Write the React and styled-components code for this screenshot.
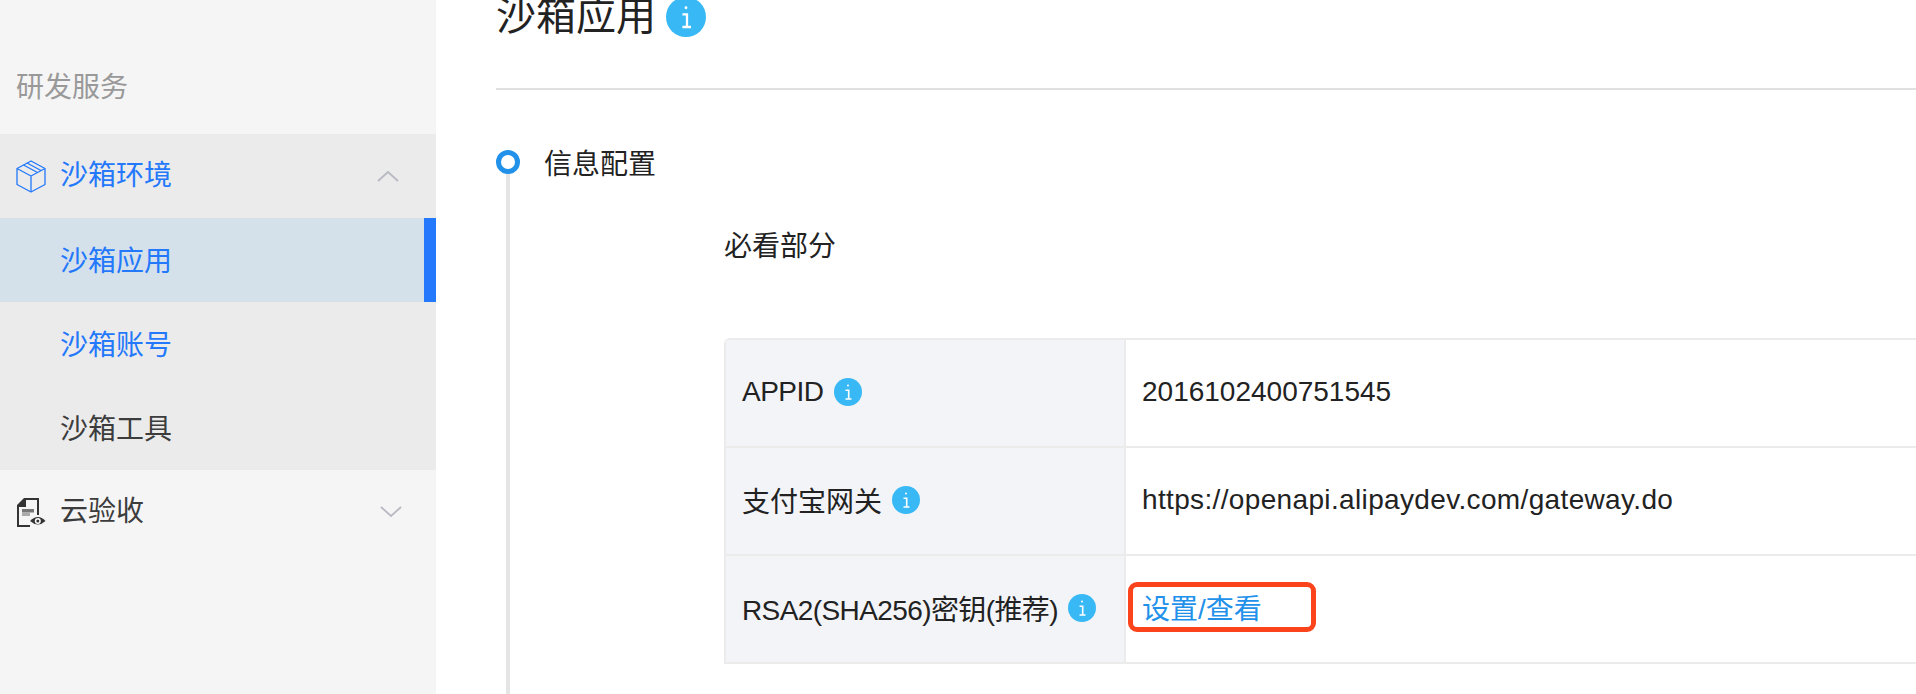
import styled, { createGlobalStyle } from "styled-components";

const GlobalStyle = createGlobalStyle`
  html, body {
    margin: 0;
    padding: 0;
    height: 100%;
    overflow: hidden;
    background: #fff;
  }
  body {
    font-family: "Liberation Sans", "Noto Sans CJK SC", sans-serif;
    color: #222;
  }
`;

const Page = styled.div`
  display: flex;
  height: 694px;
  overflow: hidden;
`;

const Sidebar = styled.aside`
  width: 436px;
  flex-shrink: 0;
  background: #f5f5f5;
  padding-top: 50px;
`;

const SideTitle = styled.div`
  height: 84px;
  padding: 0 0 14px 16px;
  box-sizing: border-box;
  display: flex;
  align-items: center;
  font-size: 28px;
  color: #999;
`;

const MenuGroup = styled.div`
  background: ${(p) => (p.$open ? "#ebebeb" : "transparent")};
`;

const MenuHead = styled.div`
  height: 84px;
  display: flex;
  align-items: center;
  padding-left: 16px;
  font-size: 28px;
  line-height: 36px;
  color: ${(p) => (p.$active ? "#2378fb" : "#3c3c3c")};
`;

const IconSlot = styled.span`
  width: 30px;
  height: 33px;
  margin-right: 14px;
  display: flex;
  align-items: center;
  justify-content: center;
`;

const Chevron = styled.svg`
  margin-left: auto;
  margin-right: ${(p) => (p.$up ? "37px" : "34px")};
  width: 22px;
  height: 12px;
`;

const SubItem = styled.div`
  height: 84px;
  box-sizing: border-box;
  display: flex;
  align-items: center;
  padding: 0 0 2px 60px;
  font-size: 28px;
  color: ${(p) => (p.$blue ? "#2378fb" : "#3c3c3c")};
  background: ${(p) => (p.$selected ? "#d5e1ea" : "transparent")};
  border-right: ${(p) => (p.$selected ? "12px solid #2378fb" : "none")};
`;

const Main = styled.main`
  flex: 1;
  min-width: 0;
  padding-left: 60px;
`;

const TitleRow = styled.div`
  height: 88px;
  display: flex;
  align-items: flex-start;
  gap: 10px;
  border-bottom: 2px solid #e0e0e0;
`;

const PageTitle = styled.h1`
  margin: -10px 0 0;
  font-size: 40px;
  line-height: 52px;
  font-weight: 400;
  color: #222;
`;

const TitleInfo = styled.span`
  display: flex;
  margin-top: -3px;
`;

const Timeline = styled.section`
  position: relative;
  padding-left: 48px;
  padding-top: 57px;
  height: 560px;
`;

const TimelineRail = styled.span`
  position: absolute;
  left: 10px;
  top: 72px;
  bottom: 0;
  width: 4px;
  background: #e5e5e5;
`;

const TimelineDot = styled.span`
  position: absolute;
  left: 0;
  top: 60px;
  width: 24px;
  height: 24px;
  box-sizing: border-box;
  border: 5px solid #2291ea;
  border-radius: 50%;
  background: #fff;
`;

const StepTitle = styled.div`
  font-size: 28px;
  line-height: 36px;
  color: #222;
`;

const Section = styled.div`
  margin-left: 180px;
  margin-top: 46px;
`;

const SectionTitle = styled.div`
  font-size: 28px;
  line-height: 36px;
  color: #222;
  margin-bottom: 73px;
`;

const Table = styled.div`
  width: 1400px;
  border: 2px solid #ebebeb;
  border-right: none;
  border-top-left-radius: 6px;
  box-sizing: border-box;
`;

const Row = styled.div`
  display: flex;
  height: 106px;
  border-top: ${(p) => (p.$first ? "none" : "2px solid #ebebeb")};
`;

const LabelCell = styled.div`
  width: 400px;
  flex-shrink: 0;
  box-sizing: border-box;
  background: #f3f4f8;
  border-right: 2px solid #ebebeb;
  padding: 0 0 2px 16px;
  display: flex;
  align-items: center;
  gap: 10px;
  font-size: 28px;
  color: #222;
`;

const LabelText = styled.span`
  letter-spacing: ${(p) => p.$spacing || "0"};
`;

const ValueCell = styled.div`
  flex: 1;
  padding: 0 0 2px 16px;
  display: flex;
  align-items: center;
  font-size: 28px;
  letter-spacing: ${(p) => (p.$wide ? "0.35px" : "0")};
  color: #222;
`;

const ActionLink = styled.a`
  color: #2291ea;
  font-size: 28px;
  margin-top: -2px;
  text-decoration: none;
  position: relative;
`;

const Highlight = styled.span`
  position: absolute;
  left: -14px;
  top: -5px;
  width: 188px;
  height: 50px;
  box-sizing: border-box;
  border: 5.5px solid #fb431c;
  border-radius: 9px;
`;

const InfoIcon = ({ size = 28 }) => (
  <svg width={size} height={size} viewBox="0 0 28 28">
    <circle cx="14" cy="14" r="14" fill="#38b9f5" />
    <circle cx="14" cy="7.5" r="1" fill="#fff" />
    <path d="M11.5 12.2h3.2v8.6M11.5 21h6" fill="none" stroke="#fff" strokeWidth="1.6" />
  </svg>
);

const BoxIcon = () => (
  <svg width="30" height="33" viewBox="0 0 30 33" fill="none" stroke="#2378fb" strokeWidth="1.3" strokeLinejoin="round">
    <path d="M15 1 L29 8.5 V24.5 L15 32 L1 24.5 V8.5 Z" />
    <path d="M1 8.5 L15 16 L29 8.5 M15 16 V32" />
    <path d="M7.5 5 L21.5 12.5 M11 3 L25 10.5" />
  </svg>
);

const DocEyeIcon = () => (
  <svg width="30" height="31" viewBox="0 0 30 31">
    <path d="M8 1 H23 V18 H21 V3 H10 V10 H3 V28 H14 V30 H1 V8 Z" fill="#333" />
    <rect x="6" y="12" width="12" height="3.5" fill="#777" />
    <rect x="6" y="15.5" width="8" height="3.5" fill="#aaa" />
    <path d="M14 24 Q22 16 29.5 24 Q22 31 14 24 Z" fill="#333" />
    <circle cx="21.8" cy="24" r="3" fill="#fff" />
    <circle cx="21.8" cy="24" r="1.5" fill="#333" />
  </svg>
);

const App = () => (
  <Page>
    <GlobalStyle />
    <Sidebar>
      <SideTitle>研发服务</SideTitle>
      <MenuGroup $open>
        <MenuHead $active>
          <IconSlot>
            <BoxIcon />
          </IconSlot>
          沙箱环境
          <Chevron $up viewBox="0 0 22 12" fill="none" stroke="#b9b9c3" strokeWidth="1.8">
            <path d="M1 11 L11 2 L21 11" />
          </Chevron>
        </MenuHead>
        <SubItem $blue $selected>沙箱应用</SubItem>
        <SubItem $blue>沙箱账号</SubItem>
        <SubItem>沙箱工具</SubItem>
      </MenuGroup>
      <MenuHead>
        <IconSlot>
          <DocEyeIcon />
        </IconSlot>
        云验收
        <Chevron viewBox="0 0 22 12" fill="none" stroke="#b9b9c3" strokeWidth="1.8">
          <path d="M1 1 L11 10 L21 1" />
        </Chevron>
      </MenuHead>
    </Sidebar>
    <Main>
      <TitleRow>
        <PageTitle>沙箱应用</PageTitle>
        <TitleInfo>
          <InfoIcon size={40} />
        </TitleInfo>
      </TitleRow>
      <Timeline>
        <TimelineRail />
        <TimelineDot />
        <StepTitle>信息配置</StepTitle>
        <Section>
          <SectionTitle>必看部分</SectionTitle>
          <Table>
            <Row $first>
              <LabelCell>
                <LabelText $spacing="-0.5px">APPID</LabelText>
                <InfoIcon />
              </LabelCell>
              <ValueCell>2016102400751545</ValueCell>
            </Row>
            <Row>
              <LabelCell>
                <LabelText>支付宝网关</LabelText>
                <InfoIcon />
              </LabelCell>
              <ValueCell $wide>https://openapi.alipaydev.com/gateway.do</ValueCell>
            </Row>
            <Row>
              <LabelCell>
                <LabelText $spacing="-0.6px">RSA2(SHA256)密钥(推荐)</LabelText>
                <InfoIcon />
              </LabelCell>
              <ValueCell>
                <ActionLink>
                  <Highlight />
                  设置/查看
                </ActionLink>
              </ValueCell>
            </Row>
          </Table>
        </Section>
      </Timeline>
    </Main>
  </Page>
);

export default App;
